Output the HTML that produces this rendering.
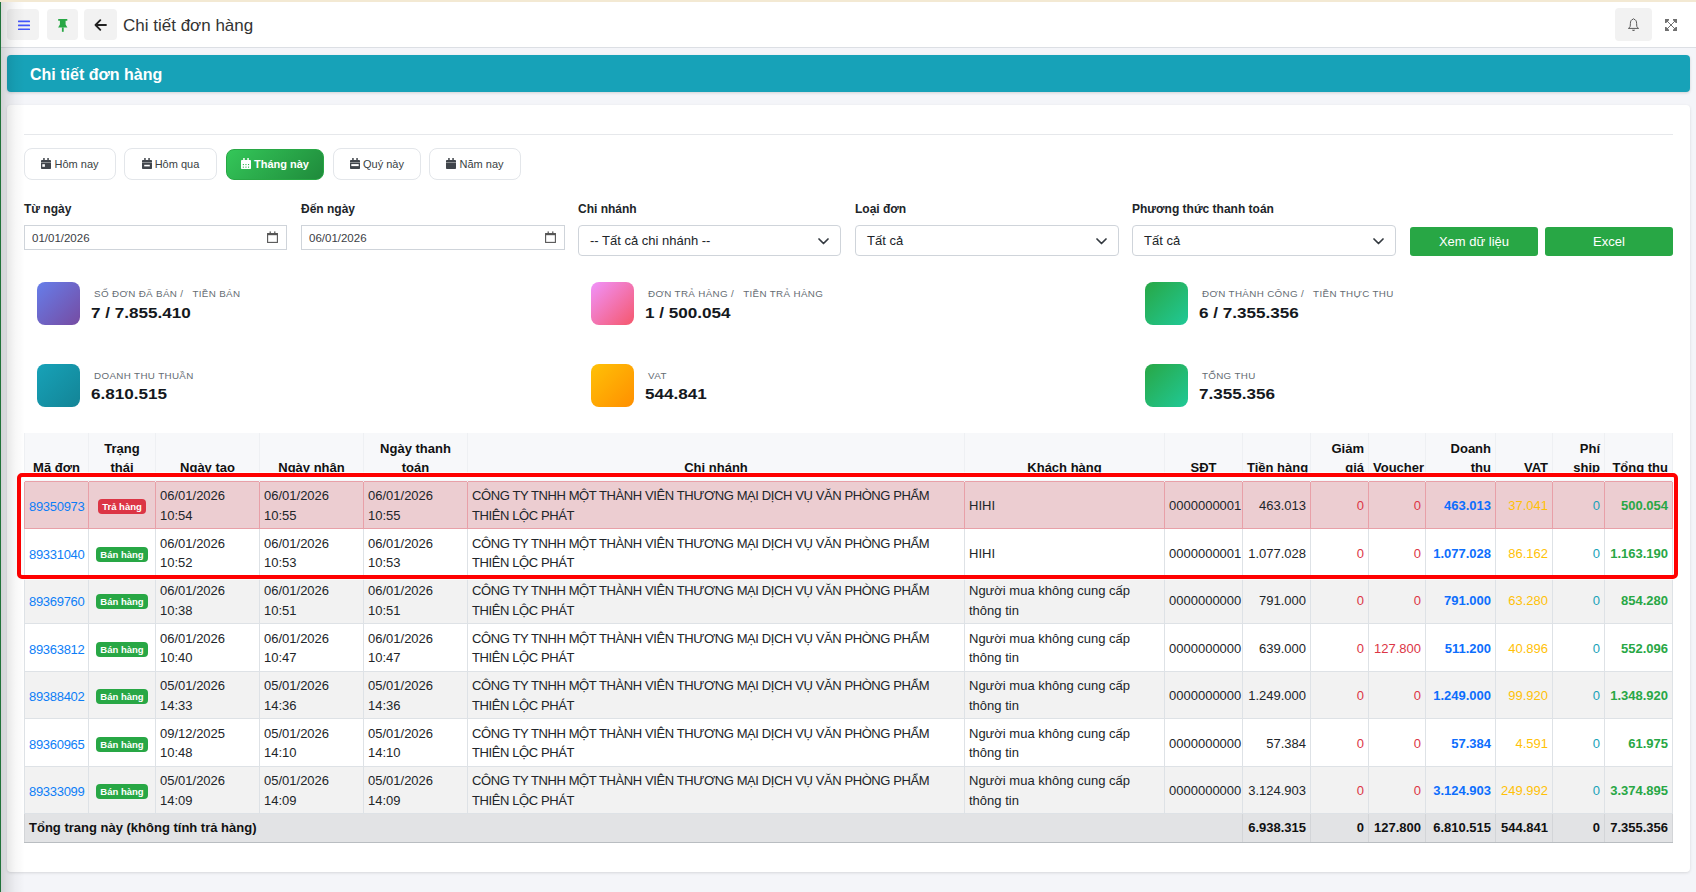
<!DOCTYPE html>
<html><head><meta charset="utf-8">
<style>
*{box-sizing:border-box;margin:0;padding:0}
html,body{width:1696px;height:892px;overflow:hidden}
body{background:#f4f5f9;font-family:"Liberation Sans",sans-serif;color:#212529;position:relative}
.abs{position:absolute}
#topline{left:0;top:0;width:1696px;height:2px;background:#f3e9d3}
#leftline{left:0;top:2px;width:1px;height:890px;background:#21733a;z-index:20}
#leftshadow{left:1px;top:2px;width:24px;height:890px;background:linear-gradient(to right,rgba(0,0,0,.14),rgba(0,0,0,.09) 25%,rgba(0,0,0,.03) 60%,rgba(0,0,0,0));z-index:19;pointer-events:none}
#header{left:0;top:2px;width:1696px;height:46px;background:#fff;border-bottom:1px solid #dcdfe4}
.hbtn{position:absolute;top:7px;width:32px;height:31px;background:#f2f2f2;border-radius:4px}
#htitle{left:123px;top:14px;font-size:17px;color:#333;position:absolute;white-space:nowrap}
#banner{left:7px;top:55px;width:1683px;height:37px;background:#17a2b8;border-radius:4px;box-shadow:0 1px 3px rgba(0,0,0,.15)}
#banner span{position:absolute;left:23px;top:10.5px;color:#fff;font-weight:bold;font-size:16px}
#card{left:7px;top:105px;width:1683px;height:767px;background:#fff;border-radius:4px;box-shadow:0 1px 3px rgba(0,0,0,.12)}
#hr{left:24px;top:134px;width:1649px;height:1px;background:#e6e8eb}
.qb{position:absolute;top:148px;height:32px;border:1px solid #e3e6ea;border-radius:8px;background:#fff;font-size:11px;color:#3a3f44;display:flex;align-items:center;justify-content:center;white-space:nowrap;padding-bottom:1px}
.qb.active{background:linear-gradient(135deg,#34c759,#1f8a3b);border-color:#28a745;color:#fff;font-weight:bold}
.lbl{position:absolute;top:202px;font-size:12px;font-weight:bold;color:#212529;white-space:nowrap}
.dinp{position:absolute;top:225px;height:25px;border:1px solid #cfd4da;background:#fff;font-size:11.5px;color:#3b4045;padding-left:7px;line-height:25px}
.dinp svg{position:absolute;right:8px;top:4.5px}
.sel svg{position:absolute;right:11px;top:11.5px}
.sel{position:absolute;top:225px;height:31px;border:1px solid #cfd4da;border-radius:4px;background:#fff;font-size:13px;color:#212529;padding-left:11px;line-height:29px}
.gbtn{position:absolute;top:227px;height:29px;background:#28a745;border-radius:3px;color:#fff;font-size:13px;text-align:center;line-height:29px}
.sico{position:absolute;width:43px;height:43px;border-radius:8px}
.slbl{position:absolute;font-size:9.8px;letter-spacing:.35px;color:#656c73;white-space:pre;text-transform:uppercase}
.sval{position:absolute;font-size:15px;font-weight:bold;color:#141820;white-space:nowrap;transform:scaleX(1.14);transform-origin:0 0}
#tbl{position:absolute;left:24px;top:433px;width:1648px;table-layout:fixed;border-collapse:collapse;font-size:13px;line-height:19.5px;color:#212529}
#tbl th{background:#f7f8fa;font-weight:bold;vertical-align:bottom;padding:0 4px 3.5px 4px;height:48px;border-left:1px solid #eef0f3;border-right:1px solid #eef0f3;color:#111;white-space:nowrap;line-height:19px}
#tbl td{border:1px solid #dee2e6;padding:4.75px 4px 2.75px 4px;vertical-align:middle;height:47.5px;white-space:nowrap;overflow:hidden}
#tbl .c{text-align:center}
#tbl .r{text-align:right}
#tbl .cn{letter-spacing:-.4px}
#tbl tr.odd td{background:#f2f2f2}
#tbl tr.even td{background:#fff}
#tbl tr.danger td{background:#eccdd1;border-color:#e8a0a8}
#tbl .lnk{color:#0d7ef7;letter-spacing:-.3px;padding-top:5.75px;padding-bottom:1.75px}
#tbl .red{color:#dc3545}
#tbl .blue{color:#0d6efd;font-weight:bold}
#tbl .amber{color:#ffc107}
#tbl .teal{color:#17a2b8}
#tbl .green{color:#28a745;font-weight:bold}
#tbl tfoot td{background:#e2e3e5;font-weight:bold;height:28.5px;padding:0 4px;border-color:#d3d5d8;border-bottom:1px solid #b9bdc1;color:#111}
#redbox{position:absolute;left:17px;top:473px;width:661px;height:106px;border:4px solid #ff0000;border-radius:5px;box-shadow:0 0 0 1px rgba(255,255,255,.7),inset 3px 3px 0 0 #fff;width:1661px}
.bdg{display:inline-block;height:15px;line-height:15px;padding:0 4px;border-radius:4px;color:#fff;font-weight:bold;font-size:9.5px;vertical-align:middle}
.bdg.ban{background:#28a745}
.bdg.tra{background:#dc3545}
</style></head><body>
<div id="topline" class="abs"></div>
<div id="leftline" class="abs"></div>
<div id="leftshadow" class="abs"></div>
<div id="header" class="abs">
  <div class="hbtn" style="left:7px"><svg class="abs" style="left:11px;top:11px" width="12" height="10" viewBox="0 0 12 10"><rect x="0" y="0.6" width="12" height="1.7" rx=".5" fill="#4356fb"/><rect x="0" y="4.6" width="12" height="1.7" rx=".5" fill="#4356fb"/><rect x="0" y="8.6" width="12" height="1.7" rx=".5" fill="#4356fb"/></svg></div>
  <div class="hbtn" style="left:47px;width:31px"><svg class="abs" style="left:10.5px;top:9.5px" width="10" height="13" viewBox="0 0 10 13"><path d="M0.2 0 H9.3 V1.8 H7.6 V5.6 L9.4 8.6 H0.1 L1.9 5.6 V1.8 H0.2 Z" fill="#28a745"/><rect x="3.9" y="8.4" width="1.8" height="4.4" fill="#28a745"/></svg></div>
  <div class="hbtn" style="left:84px;width:33px"><svg class="abs" style="left:10px;top:10px" width="13" height="13" viewBox="0 0 13 13"><path d="M6.3 1.2 L1.5 6 L6.3 10.8 M1.6 6 H12" stroke="#222" stroke-width="1.8" fill="none" stroke-linecap="round" stroke-linejoin="round"/></svg></div>
  <div id="htitle">Chi tiết đơn hàng</div>
  <div class="hbtn" style="left:1615px;width:37px;top:6px;height:33px"><svg class="abs" style="left:12px;top:10px" width="13" height="14" viewBox="0 0 13 14"><path d="M6.5 0.6 L7 1.3 C8.9 1.6 9.6 3.4 9.6 5.3 L9.8 8.3 C9.9 9.3 10.8 10 11.6 10.4 H1.4 C2.2 10 3.1 9.3 3.2 8.3 L3.4 5.3 C3.4 3.4 4.1 1.6 6 1.3 Z" stroke="#5a5a5a" stroke-width="1" fill="none" stroke-linejoin="round"/><path d="M4.9 11.8 H8.1 C7.7 12.6 7.2 13 6.5 13 C5.8 13 5.3 12.6 4.9 11.8 Z" fill="#5a5a5a"/></svg></div>
  <svg class="abs" style="left:1665px;top:17px" width="12" height="12" viewBox="0 0 12 12"><path d="M2 2 L10 10 M10 2 L2 10" stroke="#707070" stroke-width="1"/><path d="M0 0 H4 V1.2 L1.2 4 H0 Z M12 0 V4 H10.8 L8 1.2 V0 Z M0 12 V8 H1.2 L4 10.8 V12 Z M12 12 H8 V10.8 L10.8 8 H12 Z" fill="#707070"/></svg>
</div>
<div id="banner" class="abs"><span>Chi tiết đơn hàng</span></div>
<div id="card" class="abs"></div>
<div id="hr" class="abs"></div>

<div class="qb" style="left:24px;width:92px"><svg width="10" height="11" viewBox="0 0 10 11" style="margin-right:3px;flex:none"><rect x="0" y="2" width="10" height="9" rx=".8" fill="#40454b"/><rect x="2.2" y="0" width="1.5" height="3" fill="#40454b"/><rect x="6.3" y="0" width="1.5" height="3" fill="#40454b"/><rect x="0" y="4.1" width="10" height=".9" fill="rgba(255,255,255,.45)"/><rect x="1.3" y="6.2" width="2.6" height="2.6" fill="#fff"/></svg>Hôm nay</div>
<div class="qb" style="left:124px;width:93px"><svg width="10" height="11" viewBox="0 0 10 11" style="margin-right:3px;flex:none"><rect x="0" y="2" width="10" height="9" rx=".8" fill="#40454b"/><rect x="2.2" y="0" width="1.5" height="3" fill="#40454b"/><rect x="6.3" y="0" width="1.5" height="3" fill="#40454b"/><rect x="0" y="4.1" width="10" height=".9" fill="rgba(255,255,255,.45)"/><rect x="2.2" y="6.8" width="5.6" height="1.6" fill="#fff"/></svg>Hôm qua</div>
<div class="qb active" style="left:226px;width:98px;top:148.5px;height:31px"><svg width="10" height="11" viewBox="0 0 10 11" style="margin-right:3px;flex:none"><rect x="0" y="2" width="10" height="9" rx=".8" fill="#fff"/><rect x="2.2" y="0" width="1.5" height="3" fill="#fff"/><rect x="6.3" y="0" width="1.5" height="3" fill="#fff"/><rect x="0" y="4.1" width="10" height=".9" fill="rgba(255,255,255,.45)"/><rect x="1.8" y="6.0" width="1.1" height="1.1" fill="#2fb450"/><rect x="1.8" y="8.6" width="1.1" height="1.1" fill="#2fb450"/><rect x="4.4" y="6.0" width="1.1" height="1.1" fill="#2fb450"/><rect x="4.4" y="8.6" width="1.1" height="1.1" fill="#2fb450"/><rect x="7.0" y="6.0" width="1.1" height="1.1" fill="#2fb450"/><rect x="7.0" y="8.6" width="1.1" height="1.1" fill="#2fb450"/></svg>Tháng này</div>
<div class="qb" style="left:333px;width:88px"><svg width="10" height="11" viewBox="0 0 10 11" style="margin-right:3px;flex:none"><rect x="0" y="2" width="10" height="9" rx=".8" fill="#40454b"/><rect x="2.2" y="0" width="1.5" height="3" fill="#40454b"/><rect x="6.3" y="0" width="1.5" height="3" fill="#40454b"/><rect x="0" y="4.1" width="10" height=".9" fill="rgba(255,255,255,.45)"/><rect x="1.3" y="6.1" width="7.4" height="2" fill="#fff"/></svg>Quý này</div>
<div class="qb" style="left:429px;width:92px"><svg width="10" height="11" viewBox="0 0 10 11" style="margin-right:3px;flex:none"><rect x="0" y="2" width="10" height="9" rx=".8" fill="#40454b"/><rect x="2.2" y="0" width="1.5" height="3" fill="#40454b"/><rect x="6.3" y="0" width="1.5" height="3" fill="#40454b"/><rect x="0" y="4.1" width="10" height=".9" fill="rgba(255,255,255,.45)"/></svg>Năm nay</div>

<div class="lbl" style="left:24px">Từ ngày</div>
<div class="lbl" style="left:301px">Đến ngày</div>
<div class="lbl" style="left:578px">Chi nhánh</div>
<div class="lbl" style="left:855px">Loại đơn</div>
<div class="lbl" style="left:1132px">Phương thức thanh toán</div>

<div class="dinp" style="left:24px;width:263px">01/01/2026<svg width="11" height="12" viewBox="0 0 11 12"><rect x=".6" y="2.6" width="9.8" height="8.8" fill="none" stroke="#555" stroke-width="1.1"/><rect x=".6" y="2.4" width="9.8" height="1.8" fill="#555"/><rect x="2.6" y=".4" width="1.2" height="2.4" fill="#555"/><rect x="7.2" y=".4" width="1.2" height="2.4" fill="#555"/></svg></div>
<div class="dinp" style="left:301px;width:264px">06/01/2026<svg width="11" height="12" viewBox="0 0 11 12"><rect x=".6" y="2.6" width="9.8" height="8.8" fill="none" stroke="#555" stroke-width="1.1"/><rect x=".6" y="2.4" width="9.8" height="1.8" fill="#555"/><rect x="2.6" y=".4" width="1.2" height="2.4" fill="#555"/><rect x="7.2" y=".4" width="1.2" height="2.4" fill="#555"/></svg></div>
<div class="sel" style="left:578px;width:263px">-- Tất cả chi nhánh --<svg width="11" height="7" viewBox="0 0 11 7"><path d="M1 1 L5.5 5.5 L10 1" stroke="#343a40" stroke-width="1.7" fill="none" stroke-linecap="round" stroke-linejoin="round"/></svg></div>
<div class="sel" style="left:855px;width:264px">Tất cả<svg width="11" height="7" viewBox="0 0 11 7"><path d="M1 1 L5.5 5.5 L10 1" stroke="#343a40" stroke-width="1.7" fill="none" stroke-linecap="round" stroke-linejoin="round"/></svg></div>
<div class="sel" style="left:1132px;width:264px">Tất cả<svg width="11" height="7" viewBox="0 0 11 7"><path d="M1 1 L5.5 5.5 L10 1" stroke="#343a40" stroke-width="1.7" fill="none" stroke-linecap="round" stroke-linejoin="round"/></svg></div>
<div class="gbtn" style="left:1410px;width:128px">Xem dữ liệu</div>
<div class="gbtn" style="left:1545px;width:128px">Excel</div>

<div class="sico" style="left:37px;top:282px;background:linear-gradient(135deg,#667eea,#764ba2)"></div>
<div class="sico" style="left:591px;top:282px;background:linear-gradient(135deg,#f093fb,#f5576c)"></div>
<div class="sico" style="left:1145px;top:282px;background:linear-gradient(135deg,#28a745,#20c997)"></div>
<div class="sico" style="left:37px;top:364px;background:linear-gradient(135deg,#17a2b8,#138496)"></div>
<div class="sico" style="left:591px;top:364px;background:linear-gradient(135deg,#ffc107,#ff8f00)"></div>
<div class="sico" style="left:1145px;top:364px;background:linear-gradient(135deg,#28a745,#20c997)"></div>

<div class="slbl" style="left:91px;top:288px"> Số đơn đã bán /   Tiền bán</div>
<div class="sval" style="left:91px;top:304px">7 / 7.855.410</div>
<div class="slbl" style="left:645px;top:288px"> Đơn trả hàng /   Tiền trả hàng</div>
<div class="sval" style="left:645px;top:304px">1 / 500.054</div>
<div class="slbl" style="left:1199px;top:288px"> Đơn thành công /   Tiền thực thu</div>
<div class="sval" style="left:1199px;top:304px">6 / 7.355.356</div>
<div class="slbl" style="left:91px;top:370px"> Doanh thu thuần</div>
<div class="sval" style="left:91px;top:385px">6.810.515</div>
<div class="slbl" style="left:645px;top:370px"> VAT</div>
<div class="sval" style="left:645px;top:385px">544.841</div>
<div class="slbl" style="left:1199px;top:370px"> Tổng thu</div>
<div class="sval" style="left:1199px;top:385px">7.355.356</div>

<!--TABLE-->
<table id="tbl"><colgroup><col style="width:64px"><col style="width:67px"><col style="width:104px"><col style="width:104px"><col style="width:104px"><col style="width:497px"><col style="width:200px"><col style="width:78px"><col style="width:68px"><col style="width:58px"><col style="width:57px"><col style="width:70px"><col style="width:57px"><col style="width:52px"><col style="width:68px"></colgroup>
<thead><tr><th class="c">Mã đơn</th><th class="c">Trạng<br>thái</th><th class="c">Ngày tạo</th><th class="c">Ngày nhận</th><th class="c">Ngày thanh<br>toán</th><th class="c">Chi nhánh</th><th class="c">Khách hàng</th><th class="c">SĐT</th><th class="r">Tiền hàng</th><th class="r">Giảm<br>giá</th><th class="r">Voucher</th><th class="r">Doanh<br>thu</th><th class="r">VAT</th><th class="r">Phí<br>ship</th><th class="r">Tổng thu</th></tr></thead><tbody>
<tr class="danger"><td class="c lnk">89350973</td><td class="c"><span class="bdg tra">Trả hàng</span></td><td>06/01/2026<br>10:54</td><td>06/01/2026<br>10:55</td><td>06/01/2026<br>10:55</td><td class="cn">CÔNG TY TNHH MỘT THÀNH VIÊN THƯƠNG MẠI DỊCH VỤ VĂN PHÒNG PHẨM<br>THIÊN LỘC PHÁT</td><td class="kh">HIHI</td><td class="c">0000000001</td><td class="r">463.013</td><td class="r red">0</td><td class="r red">0</td><td class="r blue">463.013</td><td class="r amber">37.041</td><td class="r teal">0</td><td class="r green">500.054</td></tr>
<tr class="even"><td class="c lnk">89331040</td><td class="c"><span class="bdg ban">Bán hàng</span></td><td>06/01/2026<br>10:52</td><td>06/01/2026<br>10:53</td><td>06/01/2026<br>10:53</td><td class="cn">CÔNG TY TNHH MỘT THÀNH VIÊN THƯƠNG MẠI DỊCH VỤ VĂN PHÒNG PHẨM<br>THIÊN LỘC PHÁT</td><td class="kh">HIHI</td><td class="c">0000000001</td><td class="r">1.077.028</td><td class="r red">0</td><td class="r red">0</td><td class="r blue">1.077.028</td><td class="r amber">86.162</td><td class="r teal">0</td><td class="r green">1.163.190</td></tr>
<tr class="odd"><td class="c lnk">89369760</td><td class="c"><span class="bdg ban">Bán hàng</span></td><td>06/01/2026<br>10:38</td><td>06/01/2026<br>10:51</td><td>06/01/2026<br>10:51</td><td class="cn">CÔNG TY TNHH MỘT THÀNH VIÊN THƯƠNG MẠI DỊCH VỤ VĂN PHÒNG PHẨM<br>THIÊN LỘC PHÁT</td><td class="kh">Người mua không cung cấp<br>thông tin</td><td class="c">0000000000</td><td class="r">791.000</td><td class="r red">0</td><td class="r red">0</td><td class="r blue">791.000</td><td class="r amber">63.280</td><td class="r teal">0</td><td class="r green">854.280</td></tr>
<tr class="even"><td class="c lnk">89363812</td><td class="c"><span class="bdg ban">Bán hàng</span></td><td>06/01/2026<br>10:40</td><td>06/01/2026<br>10:47</td><td>06/01/2026<br>10:47</td><td class="cn">CÔNG TY TNHH MỘT THÀNH VIÊN THƯƠNG MẠI DỊCH VỤ VĂN PHÒNG PHẨM<br>THIÊN LỘC PHÁT</td><td class="kh">Người mua không cung cấp<br>thông tin</td><td class="c">0000000000</td><td class="r">639.000</td><td class="r red">0</td><td class="r red">127.800</td><td class="r blue">511.200</td><td class="r amber">40.896</td><td class="r teal">0</td><td class="r green">552.096</td></tr>
<tr class="odd"><td class="c lnk">89388402</td><td class="c"><span class="bdg ban">Bán hàng</span></td><td>05/01/2026<br>14:33</td><td>05/01/2026<br>14:36</td><td>05/01/2026<br>14:36</td><td class="cn">CÔNG TY TNHH MỘT THÀNH VIÊN THƯƠNG MẠI DỊCH VỤ VĂN PHÒNG PHẨM<br>THIÊN LỘC PHÁT</td><td class="kh">Người mua không cung cấp<br>thông tin</td><td class="c">0000000000</td><td class="r">1.249.000</td><td class="r red">0</td><td class="r red">0</td><td class="r blue">1.249.000</td><td class="r amber">99.920</td><td class="r teal">0</td><td class="r green">1.348.920</td></tr>
<tr class="even"><td class="c lnk">89360965</td><td class="c"><span class="bdg ban">Bán hàng</span></td><td>09/12/2025<br>10:48</td><td>05/01/2026<br>14:10</td><td>05/01/2026<br>14:10</td><td class="cn">CÔNG TY TNHH MỘT THÀNH VIÊN THƯƠNG MẠI DỊCH VỤ VĂN PHÒNG PHẨM<br>THIÊN LỘC PHÁT</td><td class="kh">Người mua không cung cấp<br>thông tin</td><td class="c">0000000000</td><td class="r">57.384</td><td class="r red">0</td><td class="r red">0</td><td class="r blue">57.384</td><td class="r amber">4.591</td><td class="r teal">0</td><td class="r green">61.975</td></tr>
<tr class="odd"><td class="c lnk">89333099</td><td class="c"><span class="bdg ban">Bán hàng</span></td><td>05/01/2026<br>14:09</td><td>05/01/2026<br>14:09</td><td>05/01/2026<br>14:09</td><td class="cn">CÔNG TY TNHH MỘT THÀNH VIÊN THƯƠNG MẠI DỊCH VỤ VĂN PHÒNG PHẨM<br>THIÊN LỘC PHÁT</td><td class="kh">Người mua không cung cấp<br>thông tin</td><td class="c">0000000000</td><td class="r">3.124.903</td><td class="r red">0</td><td class="r red">0</td><td class="r blue">3.124.903</td><td class="r amber">249.992</td><td class="r teal">0</td><td class="r green">3.374.895</td></tr>
</tbody><tfoot><tr><td colspan="8" class="ft">Tổng trang này (không tính trả hàng)</td><td class="r">6.938.315</td><td class="r">0</td><td class="r">127.800</td><td class="r">6.810.515</td><td class="r">544.841</td><td class="r">0</td><td class="r">7.355.356</td></tr></tfoot></table>
<!--/TABLE-->
<div id="redbox"></div>
</body></html>
